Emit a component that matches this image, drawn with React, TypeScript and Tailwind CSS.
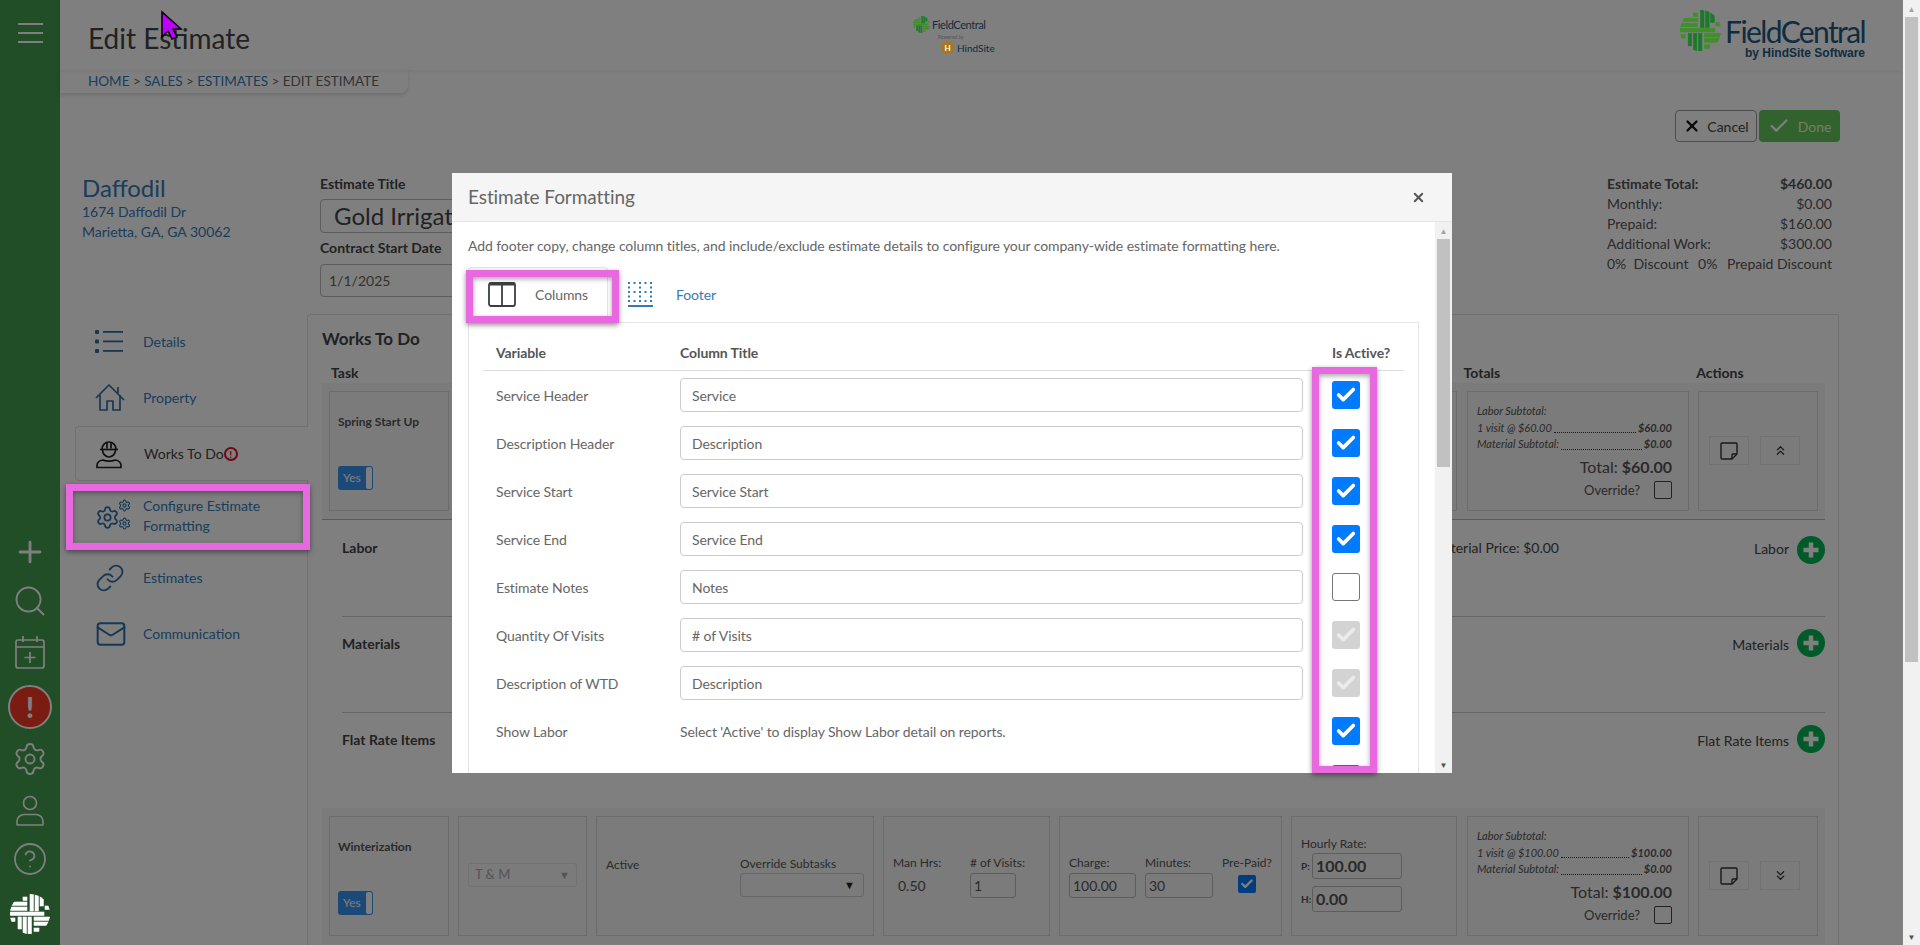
import React from 'react';
import { Plus, Search, Settings, CircleHelp, Link, Mail, X, Check, ChevronsUp, ChevronsDown } from 'lucide-react';

const font = { fontFamily: 'Lato, "Open Sans", sans-serif' };

const Mark: React.FC<{ a: string; b: string; size: number }> = ({ a, b, size }) => (
  <svg width={size} height={size} viewBox="0 0 40 40">
    <defs>
      <clipPath id={`mark-${size}`}><circle cx="20" cy="20" r="20" /></clipPath>
    </defs>
    <g clipPath={`url(#mark-${size})`}>
      <g fill={a} stroke={a} strokeWidth="0.6">
        <rect x="20" y="0" width="3.4" height="17" />
        <rect x="25" y="0" width="3.4" height="17" />
        <rect x="30" y="0" width="3.4" height="12" />
        <rect x="8" y="23" width="3.4" height="12" />
        <rect x="13" y="23" width="3.4" height="17" />
        <rect x="18" y="23" width="3.4" height="17" />
      </g>
      <g fill={b} stroke={b} strokeWidth="0.6">
        <rect x="0" y="8" width="17" height="3.4" />
        <rect x="0" y="13" width="17" height="3.4" />
        <rect x="0" y="18" width="34" height="3.4" />
        <rect x="24" y="23" width="16" height="3.4" />
        <rect x="24" y="28" width="16" height="3.4" />
        <rect x="0" y="24" width="5" height="3.4" />
        <rect x="35" y="12" width="5" height="3.4" />
        <rect x="24" y="34" width="5" height="3.4" />
        <rect x="13" y="3" width="4" height="3.4" />
      </g>
    </g>
  </svg>
);

const CalendarIcon = () => (
  <svg width="30" height="34" viewBox="0 0 30 34" fill="none" stroke="currentColor" strokeWidth="1.7" strokeLinejoin="round">
    <rect x="1" y="5" width="28" height="28" rx="2" />
    <path d="M1 12h28M8 1v6M22 1v6M15 17v11M9.500 22.500h11" />
  </svg>
);

const Sidebar = () => (
  <aside className="w-[60px] shrink-0 bg-[#429c4e] flex flex-col items-center text-white">
    <div className="mt-[23px] w-[25px] flex flex-col gap-[7px]">
      <div className="h-[2px] bg-white" />
      <div className="h-[2px] bg-white" />
      <div className="h-[2px] bg-white" />
    </div>
    <div className="mt-auto flex flex-col items-center">
      <Plus size={34} strokeWidth={2} />
      <Search size={36} strokeWidth={1.25} className="mt-[14px]" />
      <div className="mt-[16px]"><CalendarIcon /></div>
      <div className="mt-[16px] w-[44px] h-[44px] rounded-full bg-[#f43824] border-2 border-white flex items-center justify-center">
        <span className="text-[28px] font-black leading-none">!</span>
      </div>
      <Settings size={36} strokeWidth={1.25} className="mt-[12px]" />
      <svg width="30" height="32" viewBox="0 0 30 32" fill="none" stroke="currentColor" strokeWidth="1.6" className="mt-[18px]">
        <circle cx="15" cy="8" r="6.5" />
        <path d="M2 30v-4a7 7 0 0 1 7-6.5h12a7 7 0 0 1 7 6.5v4z" strokeLinejoin="round" />
      </svg>
      <CircleHelp size={36} strokeWidth={1.2} className="mt-[14px]" />
      <div className="relative z-20 mt-[17px] mb-[11px]">
        <Mark a="#ffffff" b="#ffffff" size={40} />
      </div>
    </div>
  </aside>
);

const ListIcon = () => (
  <svg width="28" height="24" viewBox="0 0 28 24" fill="currentColor">
    <rect x="0" y="0" width="4" height="4" rx="1" />
    <rect x="0" y="9.500" width="4" height="4" rx="1" />
    <rect x="0" y="19" width="4" height="4" rx="1" />
    <rect x="8" y="1" width="20" height="1.800" />
    <rect x="8" y="10.500" width="20" height="1.800" />
    <rect x="8" y="20" width="20" height="1.800" />
  </svg>
);

const Gears = () => (
  <svg width="36" height="34" viewBox="0 0 36 34">
    <Settings x={0} y={6} width={25} height={25} strokeWidth={1.7} />
    <Settings x={23} y={0} width={13} height={13} strokeWidth={2} />
    <Settings x={23} y={18} width={13} height={13} strokeWidth={2} />
  </svg>
);

const HouseIcon = () => (
  <svg width="30" height="28" viewBox="0 0 30 28" fill="none" stroke="currentColor" strokeWidth="1.7" strokeLinejoin="round">
    <path d="M1 14 14 1l15 15" />
    <path d="M5 11v15h7v-9h6v9h7V11" />
    <path d="M23 3v6" />
  </svg>
);

const WorkerIcon = () => (
  <svg width="26" height="30" viewBox="0 0 26 30" fill="none" stroke="currentColor" strokeWidth="1.7" strokeLinejoin="round">
    <path d="M6 10a7 7 0 0 1 14 0" />
    <path d="M4 10.500h18" />
    <path d="M11 3.500v6M15 3.500v6" />
    <path d="M6.500 11a6.500 7 0 0 0 13 0" />
    <path d="M1 28.500v-2c0-3 3-5 6-5.500 3 1.500 9 1.500 12 0 3 .5 6 2.500 6 5.500v2z" />
  </svg>
);

const NavItem: React.FC<{ icon: React.ReactNode; h: string; active?: boolean; children: React.ReactNode }> = ({ icon, h, active, children }) => (
  <div
    className={`${h} ml-[15px] flex items-center pl-[20px] text-[14px] leading-[20px] ${
      active
        ? 'bg-white border border-r-0 border-[#e0e0e0] rounded-l-[4px] text-[#444] relative z-[1] -mr-px'
        : 'text-[#337ab7]'
    }`}
  >
    <div className={`w-[48px] shrink-0 flex items-center ${active ? 'text-[#222]' : 'text-[#2f6ea6]'}`}>{icon}</div>
    <div>{children}</div>
  </div>
);

const LeftNav = () => (
  <nav className="w-[247px] shrink-0">
    <NavItem h="h-[56px]" icon={<ListIcon />}>Details</NavItem>
    <NavItem h="h-[56px]" icon={<HouseIcon />}>Property</NavItem>
    <NavItem h="h-[55px]" active icon={<WorkerIcon />}>
      <span className="flex items-center">
        Works To Do
        <span className="w-[14px] h-[14px] rounded-full border-2 border-[#e01020] text-[#e01020] text-[10px] font-black leading-none flex items-center justify-center">!</span>
      </span>
    </NavItem>
    <NavItem h="h-[69px]" icon={<Gears />}>Configure Estimate<br />Formatting</NavItem>
    <NavItem h="h-[56px]" icon={<Link size={30} strokeWidth={1.5} />}>Estimates</NavItem>
    <NavItem h="h-[56px]" icon={<Mail size={32} strokeWidth={1.5} />}>Communication</NavItem>
  </nav>
);

const Card: React.FC<{ w: string; className?: string; children?: React.ReactNode }> = ({ w, className = '', children }) => (
  <div className={`${w} shrink-0 h-[120px] border border-[#d8d8d8] ${className}`}>{children}</div>
);

const Toggle = () => (
  <div className="w-[35px] h-[24px] rounded-[3px] bg-[#3894f0] flex items-center justify-between pl-[5px] pr-[1px] text-[12px] text-white">
    Yes
    <div className="w-[6px] h-[22px] rounded-[2px] bg-white" />
  </div>
);

const Small: React.FC<{ v: string; className: string }> = ({ v, className }) => (
  <div className={`${className} h-[25px] border border-[#bbb] rounded-[3px] flex items-center pl-[3px] text-[14px] text-[#555]`}>{v}</div>
);

const Leader: React.FC<{ l: string; v?: string }> = ({ l, v }) => (
  <div className="flex items-end h-[16.5px] text-[11px] italic text-[#555] leading-[16.5px]">
    <span>{l}</span>
    {v && <span className="flex-1 mx-[2px] mb-[3px] border-b border-dotted border-[#333]" />}
    {v && <span className="font-bold">{v}</span>}
  </div>
);

const NoteIcon = () => (
  <svg width="18" height="18" viewBox="0 0 18 18" fill="none" stroke="currentColor" strokeWidth="1.4" strokeLinejoin="round">
    <path d="M2 1h14a1 1 0 0 1 1 1v10l-5 5H2a1 1 0 0 1-1-1V2a1 1 0 0 1 1-1z" />
    <path d="M17 12h-4a1 1 0 0 0-1 1v4" />
  </svg>
);

type RowProps = { name: string; rate: string; total: string; expanded?: boolean };

const TaskRow: React.FC<RowProps> = ({ name, rate, total, expanded }) => (
  <div className="flex gap-[9px] pl-[7px] pr-[9px] py-[8px] bg-[#f6f6f6] text-[#555]">
    <Card w="w-[120px]" className="pl-[8px] flex flex-col">
      <div className="mt-[22px] text-[12px] font-bold leading-[16px]">{name}</div>
      <div className="mt-[36px]"><Toggle /></div>
    </Card>
    <Card w="w-[129px]" className="pl-[9px] pr-[9px] pt-[46px]">
      <div className="h-[24px] border border-[#e4e4e4] rounded-[3px] flex items-center justify-between px-[6px] text-[13px] text-[#aaa]">
        T &amp; M <span className="text-[11px]">▼</span>
      </div>
    </Card>
    <Card w="w-[278px]" className="flex pl-[9px] pr-[9px] pt-[38px] text-[12px] leading-[20px]">
      <div className="w-[134px]">Active</div>
      <div className="flex-1">
        <div className="leading-[18px]">Override Subtasks</div>
        <div className="h-[24px] border border-[#ccc] rounded-[3px] flex items-center justify-end pr-[8px] text-[11px] text-[#222]">▼</div>
      </div>
    </Card>
    <Card w="w-[167px]" className="flex pl-[9px] pt-[36px] text-[12px]">
      <div className="w-[77px]">
        <div className="leading-[20px]">Man Hrs:</div>
        <div className="pl-[5px] mt-[3px] text-[14px] leading-[20px]">0.50</div>
      </div>
      <div>
        <div className="leading-[20px]"># of Visits:</div>
        <Small v="1" className="w-[46px]" />
      </div>
    </Card>
    <Card w="w-[223px]" className="flex pl-[9px] pt-[36px] text-[12px]">
      <div className="w-[76px]">
        <div className="leading-[20px]">Charge:</div>
        <Small v={rate} className="w-[67px]" />
      </div>
      <div className="w-[77px]">
        <div className="leading-[20px]">Minutes:</div>
        <Small v="30" className="w-[68px]" />
      </div>
      <div className="flex flex-col items-center">
        <div className="leading-[20px]">Pre-Paid?</div>
        <div className="mt-[2px] w-[18px] h-[18px] bg-[#007bff] rounded-[2px] flex items-center justify-center">
          <Check size={14} strokeWidth={4} className="text-white" />
        </div>
      </div>
    </Card>
    <Card w="w-[166px]" className="pl-[9px] pt-[17px] text-[12px]">
      <div className="leading-[20px]">Hourly Rate:</div>
      <div className="flex items-center mt-[-1px] font-bold">
        <span className="w-[11px] text-[10px]">P:</span>
        <div className="w-[90px] h-[26px] border border-[#bbb] rounded-[3px] flex items-center pl-[3px] text-[16px]">{rate}</div>
      </div>
      <div className="flex items-center mt-[7px] font-bold">
        <span className="w-[11px] text-[10px]">H:</span>
        <div className="w-[90px] h-[26px] border border-[#bbb] rounded-[3px] flex items-center pl-[3px] text-[16px]">0.00</div>
      </div>
    </Card>
    <Card w="w-[222px]" className="ml-px pl-[9px] pr-[16px] pt-[11px]">
      <Leader l="Labor Subtotal:" />
      <Leader l={`1 visit @ $${rate}`} v={`$${rate}`} />
      <Leader l="Material Subtotal:" v="$0.00" />
      <div className="mt-[2px] text-right text-[16px] leading-[24px]">Total: <b>${total}</b></div>
      <div className="mt-[2px] flex items-center justify-end gap-[14px] text-[13px]">
        Override?
        <div className="w-[18px] h-[18px] border border-[#444] rounded-[2px]" />
      </div>
    </Card>
    <Card w="w-[120px]" className="pl-[10px] pt-[44px]">
      <div className="flex gap-[11px]">
        <div className="w-[40px] h-[29px] border border-[#e4e4e4] flex items-center justify-center text-[#333]">
          <NoteIcon />
        </div>
        <div className="w-[40px] h-[29px] border border-[#e4e4e4] flex items-center justify-center text-[#333]">
          {expanded ? <ChevronsUp size={15} /> : <ChevronsDown size={15} />}
        </div>
      </div>
    </Card>
  </div>
);

const AddCircle = () => (
  <svg width="28" height="28" viewBox="0 0 28 28">
    <circle cx="14" cy="14" r="14" fill="#00b454" />
    <path d="M14 6.500v15M6.500 14h15" stroke="#fff" strokeWidth="4.500" />
  </svg>
);

const Section: React.FC<{ title: string; h: string; pt: string; line?: boolean; note?: string; drop?: boolean }> = ({ title, h, pt, line, note, drop }) => (
  <div className={`${h} ${pt} ml-[20px] flex items-start justify-between ${line ? 'border-b border-[#ccc]' : ''}`}>
    <div className={`w-[200px] text-[14px] font-bold text-[#444] leading-[24px] ${drop ? 'mt-[3px]' : ''}`}>{title}</div>
    {note && <div className="ml-auto mr-[195px] text-[14px] leading-[24px] text-[#444]">{note}</div>}
    <div className="flex items-start gap-[8px] text-[14px] text-[#444]">
      <span className={`leading-[24px] ${drop ? 'mt-[4px]' : 'mt-[1px]'}`}>{title}</span>
      <AddCircle />
    </div>
  </div>
);

const WorksPanel = () => (
  <section className="flex-1 min-w-0 mr-[64px] border-l border-t border-r border-[#e0e0e0] rounded-tl-[4px] pt-[12px] pl-[14px] pr-[13px] overflow-hidden">
    <h2 className="text-[17px] font-bold leading-[24px] text-[#444]">Works To Do</h2>
    <div className="mt-[12px] h-[20px] flex text-[14px] font-bold text-[#444] leading-[20px]">
      <span className="pl-[9px]">Task</span>
      <span className="ml-[1105px]">Totals</span>
      <span className="ml-[196px]">Actions</span>
    </div>
    <div className="border-b border-[#b4b4b4]">
      <TaskRow name="Spring Start Up" rate="60.00" total="60.00" expanded />
    </div>
    <Section title="Labor" h="h-[97px]" pt="pt-[16px]" line note="Material Price: $0.00" />
    <Section title="Materials" h="h-[96px]" pt="pt-[12px]" line drop />
    <Section title="Flat Rate Items" h="h-[95px]" pt="pt-[12px]" drop />
    <TaskRow name="Winterization" rate="100.00" total="100.00" />
  </section>
);

const Summary = () => (
  <div className="w-[225px] text-[14px] leading-[20px] text-[#555]">
    <div className="flex justify-between font-bold"><span>Estimate Total:</span><span>$460.00</span></div>
    <div className="flex justify-between"><span>Monthly:</span><span>$0.00</span></div>
    <div className="flex justify-between"><span>Prepaid:</span><span>$160.00</span></div>
    <div className="flex justify-between"><span>Additional Work:</span><span>$300.00</span></div>
    <div className="flex justify-between"><span>0%&nbsp; Discount</span><span>0%</span><span>Prepaid Discount</span></div>
  </div>
);

const Page = () => (
  <div className="flex-1 min-w-0 flex flex-col bg-white">
    <header className="h-[70px] shrink-0 flex items-center shadow-[0_1px_4px_rgba(0,0,0,0.08)]">
      <h1 className="w-[853px] pl-[28px] pt-[6px] text-[28px] text-[#444] leading-none">Edit Estimate</h1>
      <div className="relative z-20 w-[80px] flex flex-col">
        <div className="flex items-center gap-[2px] text-[11px] leading-none text-[#0f2c40]">
          <Mark a="#1a7a2a" b="#3f8f2a" size={17} />
          <span className="tracking-[-0.4px]">FieldCentral</span>
        </div>
        <div className="pl-[25px] text-[5px] leading-[8px] text-[#555]">Powered by</div>
        <div className="pl-[28px] flex items-center gap-[3px] text-[10px] leading-none text-[#0f2c40]">
          <div className="w-[13px] h-[13px] rounded-full bg-[#a87818] shrink-0 flex items-center justify-center text-white text-[8px] font-bold">H</div>
          HindSite
        </div>
      </div>
      <div className="relative z-20 ml-auto mr-[38px] flex items-start gap-[4px]">
        <Mark a="#1a7a2a" b="#3f8f2a" size={41} />
        <div className="flex flex-col items-end mt-[6px]">
          <span className="text-[30px] leading-[30px] text-[#0f2c40] tracking-[-1.6px]">FieldCentral</span>
          <span className="text-[12px] leading-[14px] font-bold text-[#0f2c40]" style={{ fontFamily: '"Liberation Sans", sans-serif' }}>by HindSite Software</span>
        </div>
      </div>
    </header>
    <div className="w-[348px] h-[23px] shrink-0 pl-[28px] rounded-br-[8px] shadow-[0_2px_4px_rgba(0,0,0,0.15)] text-[13.5px] leading-[22px] text-[#337ab7]">
      HOME <span className="text-[#666]">&gt;</span> SALES <span className="text-[#666]">&gt;</span> ESTIMATES <span className="text-[#666]">&gt; EDIT ESTIMATE</span>
    </div>
    <div className="mt-[17px] mr-[63px] h-[32px] shrink-0 flex justify-end gap-[2px] text-[14px]">
      <button className="w-[82px] border border-[#999] rounded-[4px] flex items-center justify-center gap-[6px] text-[#444]">
        <X size={18} strokeWidth={3} className="text-[#111]" />
        Cancel
      </button>
      <button className="w-[81px] bg-[#64c45c] rounded-[4px] flex items-center justify-center gap-[8px] text-[#e8ffc8]">
        <Check size={22} strokeWidth={2.5} className="text-white" />
        Done
      </button>
    </div>
    <div className="mt-[32px] h-[140px] shrink-0 flex mr-[71px]">
      <div className="w-[260px] pl-[22px] text-[#337ab7]">
        <div className="text-[24px] leading-[28px]">Daffodil</div>
        <div className="text-[14px] leading-[20px]">1674 Daffodil Dr</div>
        <div className="text-[14px] leading-[20px]">Marietta, GA, GA 30062</div>
      </div>
      <div className="w-[420px] text-[#444]">
        <div className="text-[14px] font-bold leading-[20px]">Estimate Title</div>
        <div className="mt-[5px] h-[34px] pl-[13px] border border-[#bbb] rounded-[4px] flex items-center text-[24px]">Gold Irrigation</div>
        <div className="mt-[5px] text-[14px] font-bold leading-[20px]">Contract Start Date</div>
        <div className="mt-[6px] h-[33px] pl-[8px] border border-[#bbb] rounded-[4px] flex items-center text-[14px] text-[#665]">1/1/2025</div>
      </div>
      <div className="ml-auto"><Summary /></div>
    </div>
    <div className="flex flex-1 min-h-0">
      <LeftNav />
      <WorksPanel />
    </div>
  </div>
);

const ColumnsIcon = () => (
  <svg width="28" height="25" viewBox="0 0 28 25" fill="none" stroke="#3a3f44" strokeWidth="1.8">
    <rect x="1" y="1" width="26" height="23" rx="2" />
    <path d="M1 2h26" strokeWidth="3" />
    <path d="M14 1v23" />
  </svg>
);

const dots = [0, 1, 2, 3, 4];

const FooterIcon = () => (
  <svg width="25" height="25" viewBox="0 0 25 25" fill="#337ab7">
    {dots.map((r) =>
      dots.map((c) => (r % 2 === 0 || c % 2 === 0 ? <rect key={`${r}${c}`} x={c * 5.5} y={r * 4.5} width="2" height="2" /> : null)),
    )}
    <rect x="0" y="23" width="25" height="2" />
  </svg>
);

const ActiveBox: React.FC<{ state: 'on' | 'off' | 'disabled' }> = ({ state }) => {
  if (state === 'off') return <div className="w-[28px] h-[28px] rounded-[3px] border border-[#767676] bg-white" />;
  const bg = state === 'on' ? 'bg-[#007bff] text-white' : 'bg-[#d3d3d3] text-[#ebebeb]';
  return (
    <div className={`w-[28px] h-[28px] rounded-[3px] flex items-center justify-center ${bg}`}>
      <Check size={22} strokeWidth={4} />
    </div>
  );
};

const rows: { label: string; value?: string; note?: string; state: 'on' | 'off' | 'disabled' }[] = [
  { label: 'Service Header', value: 'Service', state: 'on' },
  { label: 'Description Header', value: 'Description', state: 'on' },
  { label: 'Service Start', value: 'Service Start', state: 'on' },
  { label: 'Service End', value: 'Service End', state: 'on' },
  { label: 'Estimate Notes', value: 'Notes', state: 'off' },
  { label: 'Quantity Of Visits', value: '# of Visits', state: 'disabled' },
  { label: 'Description of WTD', value: 'Description', state: 'disabled' },
  { label: 'Show Labor', note: "Select 'Active' to display Show Labor detail on reports.", state: 'on' },
  { label: '', state: 'on' },
];

const Scrollbar: React.FC<{ thumb: string }> = ({ thumb }) => (
  <div className="relative z-20 w-[17px] shrink-0 bg-[#f1f1f1] flex flex-col items-center">
    <div className="h-[17px] flex items-center text-[8px] leading-none text-[#a3a3a3]">▲</div>
    <div className={`w-[13px] bg-[#c1c1c1] ${thumb}`} />
    <div className="mt-auto h-[17px] flex items-center text-[8px] leading-none text-[#505050]">▼</div>
  </div>
);

const Modal = () => (
  <div className="absolute left-[452px] top-[173px] w-[1000px] h-[600px] z-20 bg-white flex flex-col overflow-hidden tracking-[-0.08px]">
    <div className="h-[49px] shrink-0 bg-[#f5f5f5] border-b border-[#e5e5e5] pl-[16px] pr-[26px] flex items-center justify-between">
      <h3 className="text-[19px] text-[#666]">Estimate Formatting</h3>
      <X size={15} strokeWidth={3} className="text-[#555]" />
    </div>
    <div className="flex-1 min-h-0 flex">
      <div className="flex-1 min-w-0 overflow-hidden px-[16px]">
        <p className="pt-[14px] text-[14px] leading-[20px] text-[#666] whitespace-nowrap">
          Add footer copy, change column titles, and include/exclude estimate details to configure your company-wide estimate formatting here.
        </p>
        <div className="mt-[11px] h-[55px] flex">
          <div className="w-[140px] border border-b-0 border-[#e5e5e5] rounded-t-[4px] -mb-px relative bg-white flex items-center pl-[19px] gap-[19px] pb-[2px] text-[14px] text-[#666]">
            <ColumnsIcon />
            Columns
          </div>
          <div className="ml-[20px] pb-[1px] flex items-center gap-[23px] text-[14px] text-[#337ab7]">
            <FooterIcon />
            Footer
          </div>
        </div>
        <div className="border border-[#e5e5e5] px-[14px]">
          <div className="h-[48px] grid grid-cols-[197px_623px_1fr] items-end pb-[7px] border-b border-[#ddd] text-[14px] font-bold text-[#555] leading-[20px]">
            <span className="pl-[13px]">Variable</span>
            <span>Column Title</span>
            <span className="pl-[29px] whitespace-nowrap">Is Active?</span>
          </div>
          {rows.map((r, i) => (
            <div key={i} className="h-[48px] grid grid-cols-[197px_623px_1fr] items-center text-[14px] text-[#666]">
              <span className="pl-[13px]">{r.label}</span>
              {r.value ? (
                <div className="h-[34px] border border-[#ccc] rounded-[4px] flex items-center pl-[11px]">{r.value}</div>
              ) : (
                <span>{r.note}</span>
              )}
              <div className="pl-[29px]"><ActiveBox state={r.state} /></div>
            </div>
          ))}
        </div>
      </div>
      <Scrollbar thumb="h-[228px]" />
    </div>
  </div>
);

const Cursor = () => (
  <svg className="absolute left-[160px] top-[10px] z-30" width="24" height="32" viewBox="0 0 24 32">
    <path d="M2 2v25l6-6 4 8 5-2-4-8h8z" fill="#c000ff" stroke="#000" strokeWidth="1.500" />
  </svg>
);

const Callout: React.FC<{ className: string }> = ({ className }) => (
  <div className={`absolute z-30 border-[7px] border-[#e868e0] shadow-[0_2px_5px_rgba(0,0,0,0.45),inset_0_2px_5px_rgba(0,0,0,0.35)] ${className}`} />
);

export default function App() {
  return (
    <div className="relative w-[1920px] h-[945px] overflow-hidden flex" style={font}>
      <Sidebar />
      <Page />
      <Scrollbar thumb="h-[645px]" />
      <div className="absolute left-0 top-0 bottom-0 right-[17px] bg-black/50 z-10" />
      <Modal />
      <Callout className="left-[66px] top-[484px] w-[244px] h-[66px]" />
      <Callout className="left-[466px] top-[270px] w-[153px] h-[53px]" />
      <Callout className="left-[1312px] top-[367px] w-[65px] h-[406px]" />
      <Cursor />
    </div>
  );
}
